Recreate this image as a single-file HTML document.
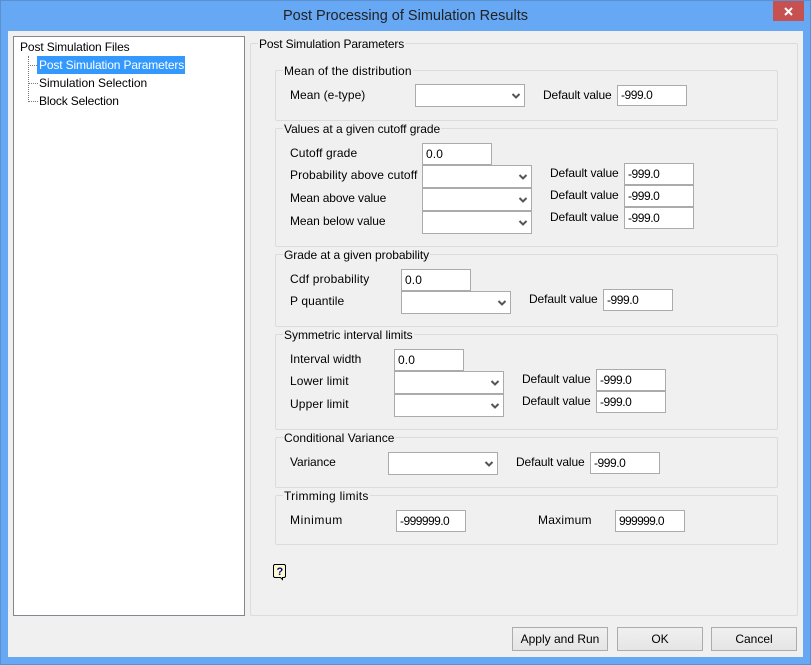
<!DOCTYPE html>
<html><head><meta charset="utf-8">
<style>
html,body{margin:0;padding:0;width:811px;height:665px;overflow:hidden;background:#66a8f4}
*{box-sizing:border-box}
body{font-family:"Liberation Sans",sans-serif;font-size:12px;color:#000;position:relative}
div{position:absolute}
.t{line-height:16px;white-space:nowrap;letter-spacing:.12px}
.dv{letter-spacing:-.11px}
.g{border:1px solid #dcdcdc;border-radius:2px}
.l{background:#f0f0f0;padding:0 1px;line-height:16px;white-space:nowrap;letter-spacing:.12px}
.i{width:70px;height:22px;background:#fff;border:1px solid #ababab;line-height:20px;padding-left:3px;letter-spacing:.1px}
.n{letter-spacing:-.45px}
.c{width:110px;height:23px;background:#fff;border:1px solid #ababab}
.c svg{position:absolute;right:3px;top:7px}
.b{height:24px;border:1px solid #acacac;background:linear-gradient(#f0f0f0,#e5e5e5);text-align:center;line-height:22px;letter-spacing:0}
.d{border-top:1px dotted #777;height:0}
</style></head><body>
<div style="left:0;top:0;width:811px;height:665px;border:1px solid #5a8fd0"></div>
<div style="left:0;top:6px;width:811px;text-align:center;font-size:14.5px;line-height:20px;color:#222">Post Processing of Simulation Results</div>
<div style="left:773px;top:1px;width:31px;height:20px;background:#c75050"><svg width="31" height="20" style="position:absolute;left:0;top:0"><path d="M12 7l7 7M19 7l-7 7" stroke="#fff" stroke-width="2"/></svg></div>
<div style="left:8px;top:31px;width:795px;height:626px;background:#f0f0f0"></div>

<div style="left:13px;top:36px;width:232px;height:580px;background:#fff;border:1px solid #828790"></div>
<div class="t" style="left:20px;top:39px;letter-spacing:-.12px">Post Simulation Files</div>
<div style="left:28px;top:56px;height:46px;border-left:1px dotted #777"></div>
<div class="d" style="left:28px;top:65px;width:9px"></div>
<div class="d" style="left:28px;top:83px;width:10px"></div>
<div class="d" style="left:28px;top:101px;width:10px"></div>
<div class="t" style="left:37px;top:56px;width:148px;height:18px;background:#3399ff;color:#fff;padding:1px 0 0 2px;letter-spacing:-.14px">Post Simulation Parameters</div>
<div class="t" style="left:39px;top:75px;letter-spacing:-.03px">Simulation Selection</div>
<div class="t" style="left:39px;top:93px;letter-spacing:-.15px">Block Selection</div>

<div class="g" style="left:250px;top:43px;width:548px;height:573px"></div>
<div class="l" style="left:258px;top:36px;letter-spacing:-.14px">Post Simulation Parameters</div>

<div class="g" style="left:275px;top:70px;width:503px;height:51px"></div>
<div class="l" style="left:283px;top:63px">Mean of the distribution</div>
<div class="t" style="left:290px;top:87px;letter-spacing:.05px">Mean (e-type)</div>
<div class="c" style="left:415px;top:84px"><svg width="10" height="8"><path d="M1.500 2l3.500 3.500 3.500-3.500" fill="none" stroke="#555" stroke-width="2"/></svg></div>
<div class="t dv" style="left:543px;top:87px">Default value</div>
<div class="i n" style="left:617px;top:85px;height:21px;line-height:19px">-999.0</div>

<div class="g" style="left:275px;top:128px;width:503px;height:119px"></div>
<div class="l" style="left:283px;top:121px;letter-spacing:-.05px">Values at a given cutoff grade</div>
<div class="t" style="left:290px;top:145px">Cutoff grade</div>
<div class="i" style="left:422px;top:143px">0.0</div>
<div class="t" style="left:290px;top:167px">Probability above cutoff</div>
<div class="c" style="left:422px;top:165px"><svg width="10" height="8"><path d="M1.500 2l3.500 3.500 3.500-3.500" fill="none" stroke="#555" stroke-width="2"/></svg></div>
<div class="t" style="left:290px;top:190px;letter-spacing:-.12px">Mean above value</div>
<div class="c" style="left:422px;top:188px"><svg width="10" height="8"><path d="M1.500 2l3.500 3.500 3.500-3.500" fill="none" stroke="#555" stroke-width="2"/></svg></div>
<div class="t" style="left:290px;top:213px;letter-spacing:-.08px">Mean below value</div>
<div class="c" style="left:422px;top:211px"><svg width="10" height="8"><path d="M1.500 2l3.500 3.500 3.500-3.500" fill="none" stroke="#555" stroke-width="2"/></svg></div>
<div class="t dv" style="left:550px;top:165px">Default value</div>
<div class="i n" style="left:624px;top:163px">-999.0</div>
<div class="t dv" style="left:550px;top:187px">Default value</div>
<div class="i n" style="left:624px;top:185px">-999.0</div>
<div class="t dv" style="left:550px;top:209px">Default value</div>
<div class="i n" style="left:624px;top:207px">-999.0</div>

<div class="g" style="left:275px;top:254px;width:503px;height:73px"></div>
<div class="l" style="left:283px;top:247px;letter-spacing:-.06px">Grade at a given probability</div>
<div class="t" style="left:290px;top:271px;letter-spacing:.18px">Cdf probability</div>
<div class="i" style="left:401px;top:269px">0.0</div>
<div class="t" style="left:290px;top:293px">P quantile</div>
<div class="c" style="left:401px;top:291px"><svg width="10" height="8"><path d="M1.500 2l3.500 3.500 3.500-3.500" fill="none" stroke="#555" stroke-width="2"/></svg></div>
<div class="t dv" style="left:529px;top:291px">Default value</div>
<div class="i n" style="left:603px;top:289px">-999.0</div>

<div class="g" style="left:275px;top:334px;width:503px;height:96px"></div>
<div class="l" style="left:283px;top:327px;letter-spacing:-.03px">Symmetric interval limits</div>
<div class="t" style="left:290px;top:351px;letter-spacing:.05px">Interval width</div>
<div class="i" style="left:394px;top:349px">0.0</div>
<div class="t" style="left:290px;top:373px">Lower limit</div>
<div class="c" style="left:394px;top:371px"><svg width="10" height="8"><path d="M1.500 2l3.500 3.500 3.500-3.500" fill="none" stroke="#555" stroke-width="2"/></svg></div>
<div class="t" style="left:290px;top:396px">Upper limit</div>
<div class="c" style="left:394px;top:394px"><svg width="10" height="8"><path d="M1.500 2l3.500 3.500 3.500-3.500" fill="none" stroke="#555" stroke-width="2"/></svg></div>
<div class="t dv" style="left:522px;top:371px">Default value</div>
<div class="i n" style="left:596px;top:369px">-999.0</div>
<div class="t dv" style="left:522px;top:393px">Default value</div>
<div class="i n" style="left:596px;top:391px">-999.0</div>

<div class="g" style="left:275px;top:437px;width:503px;height:51px"></div>
<div class="l" style="left:283px;top:430px;letter-spacing:.03px">Conditional Variance</div>
<div class="t" style="left:290px;top:454px;letter-spacing:-.1px">Variance</div>
<div class="c" style="left:388px;top:452px"><svg width="10" height="8"><path d="M1.500 2l3.500 3.500 3.500-3.500" fill="none" stroke="#555" stroke-width="2"/></svg></div>
<div class="t dv" style="left:516px;top:454px">Default value</div>
<div class="i n" style="left:590px;top:452px">-999.0</div>

<div class="g" style="left:275px;top:495px;width:503px;height:50px"></div>
<div class="l" style="left:283px;top:488px;letter-spacing:.3px">Trimming limits</div>
<div class="t" style="left:290px;top:512px;letter-spacing:.6px">Minimum</div>
<div class="i" style="left:396px;top:510px;letter-spacing:-.55px">-999999.0</div>
<div class="t" style="left:538px;top:512px;letter-spacing:.25px">Maximum</div>
<div class="i" style="left:615px;top:510px;letter-spacing:-.65px">999999.0</div>

<svg width="16" height="18" style="position:absolute;left:272px;top:563px"><path d="M2.500 1.500h10l1 1v11l-1 1h-2v2l-2-2h-6l-1-1v-11z" fill="#fffbd0" stroke="#000"/><text x="4.500" y="12" font-family="Liberation Sans" font-size="11" font-weight="bold" fill="#00008b">?</text></svg>

<div class="b" style="left:512px;top:627px;width:96px">Apply and Run</div>
<div class="b" style="left:617px;top:627px;width:86px">OK</div>
<div class="b" style="left:711px;top:627px;width:86px">Cancel</div>
</body></html>
